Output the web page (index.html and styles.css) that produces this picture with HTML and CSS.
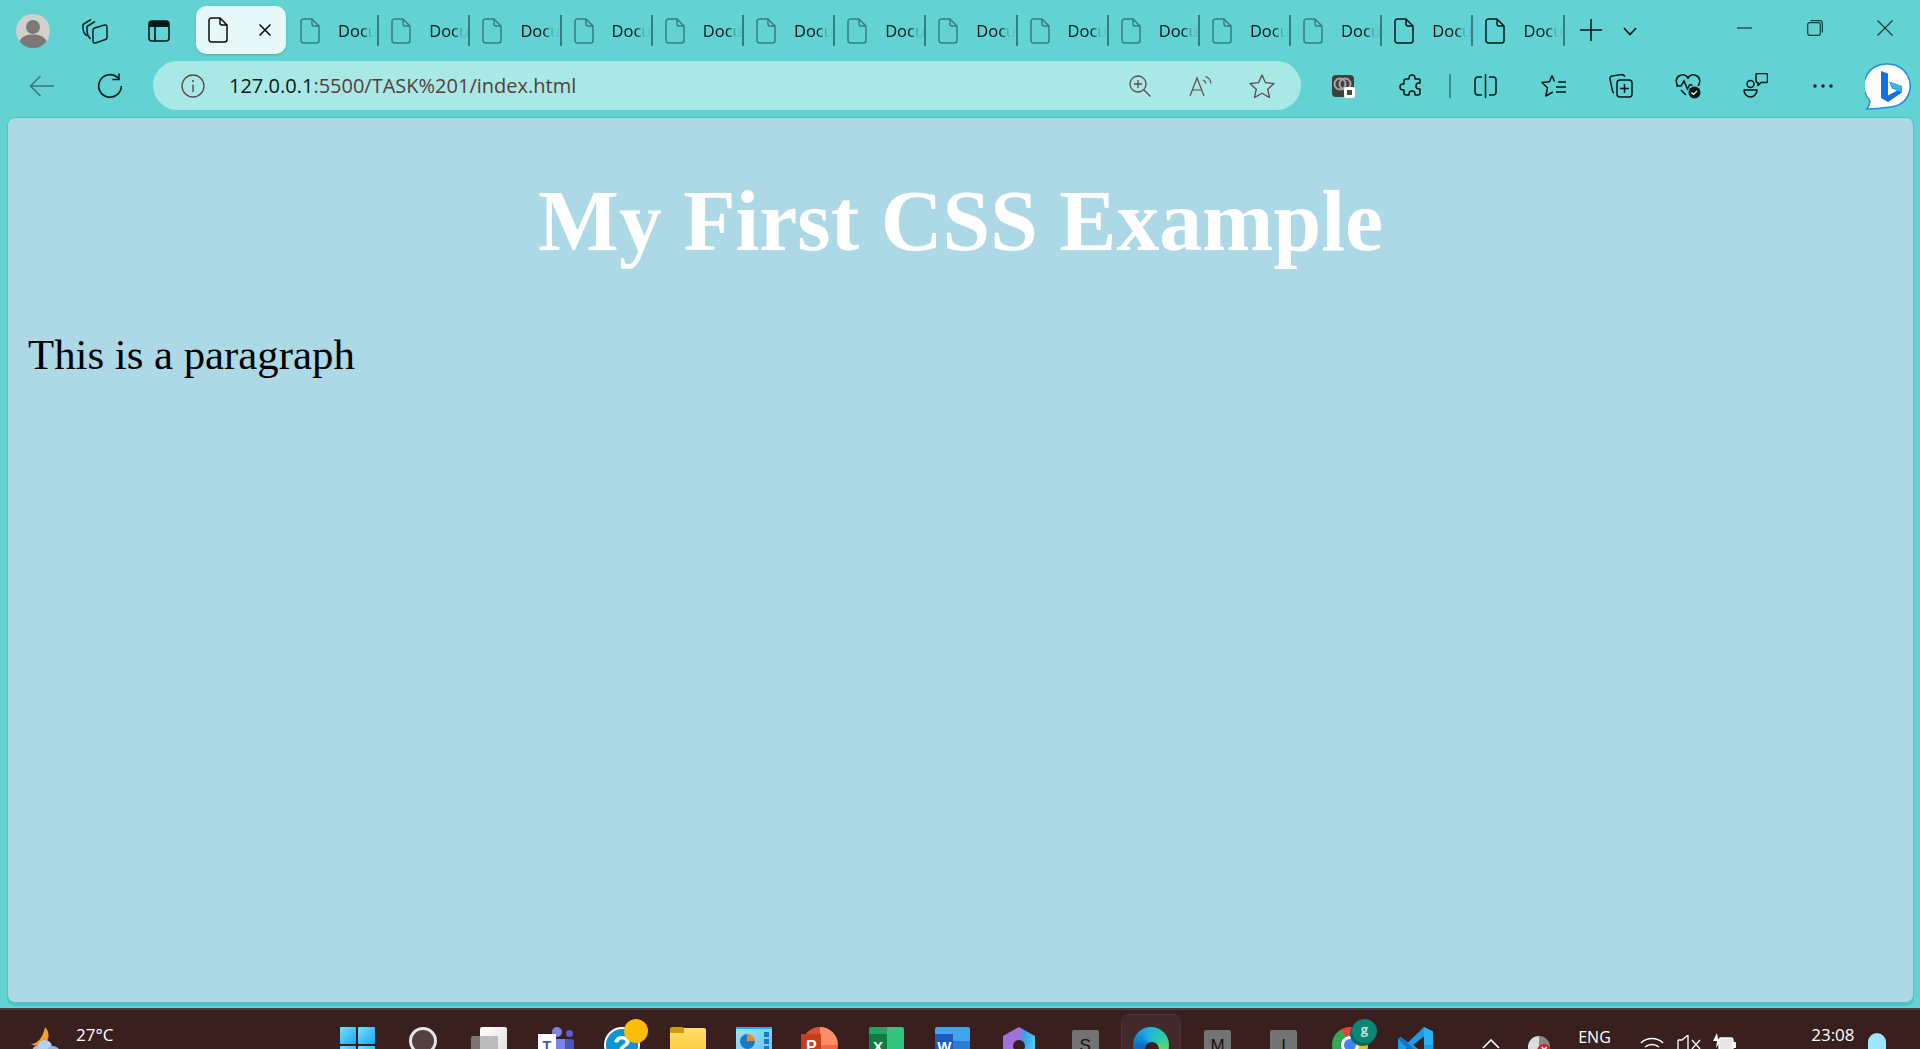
FILE: index.html
```html
<!DOCTYPE html>
<html lang="en">
<head>
<meta charset="utf-8">
<title>My First CSS Example</title>
<link rel="stylesheet" href="styles.css">
</head>
<body>
<svg class="defs" width="0" height="0">
  <symbol id="doc" viewBox="0 0 20 26"><path d="M3.5 1H12l7 7v14.5a2.5 2.5 0 0 1-2.5 2.5h-13A2.5 2.5 0 0 1 1 22.500V3.500A2.500 2.500 0 0 1 3.500 1ZM12 1v5a2 2 0 0 0 2 2h5" fill="none" stroke="currentColor" stroke-width="1.500" stroke-linejoin="round"/></symbol>
</svg>
<div class="window">
  <div class="tabstrip">
    <div class="slot-avatar">
      <svg width="34" height="34" viewBox="0 0 34 34"><circle cx="17" cy="17" r="17" fill="#d2d0cd"/><circle cx="17" cy="13" r="7" fill="#7b7977"/><path d="M3.500 27.500C6 22 11 20.500 17 20.500S28 22 30.500 27.500A17 17 0 0 1 3.500 27.500Z" fill="#7b7977"/></svg>
    </div>
    <div class="slot-work">
      <svg width="26" height="26" viewBox="0 0 26 26" fill="none" stroke="#0b2224" stroke-width="1.500" stroke-linejoin="round"><path d="M5 18C2.500 16 1 13 1 10V6.500L9 1.500"/><path d="M8.500 21C6.500 19 5 16.500 5 13V8.500L13 3.500"/><path d="M11 12c0-1 .5-1.700 1.500-2l10-3c1.500-.3 2.500.5 2.500 2v10.500c0 1-.5 1.700-1.500 2l-10 3.500c-1.500.4-2.500-.5-2.500-2Z"/></svg>
    </div>
    <div class="slot-actions">
      <svg width="22" height="22" viewBox="0 0 22 22"><rect x="1" y="1" width="20" height="20" rx="3" fill="none" stroke="#06181a" stroke-width="1.600"/><path d="M1 4a3 3 0 0 1 3-3h14a3 3 0 0 1 3 3v3H1Z" fill="#06181a"/><path d="M7 7v14" stroke="#06181a" stroke-width="1.600"/></svg>
    </div>
    <div class="tab-active">
      <svg class="icon-doc-active" width="20" height="26"><use href="#doc"/></svg>
      <svg width="14" height="14" viewBox="0 0 14 14"><path d="M1.500 1.500l11 11M12.500 1.500l-11 11" stroke="#0a0a0a" stroke-width="1.500" fill="none"/></svg>
    </div>
    <div class="tabs">
      <div class="tab"><svg width="20" height="26"><use href="#doc"/></svg><span class="tab-title">Docu</span></div>
      <div class="tab"><svg width="20" height="26"><use href="#doc"/></svg><span class="tab-title">Docu</span></div>
      <div class="tab"><svg width="20" height="26"><use href="#doc"/></svg><span class="tab-title">Docu</span></div>
      <div class="tab"><svg width="20" height="26"><use href="#doc"/></svg><span class="tab-title">Docu</span></div>
      <div class="tab"><svg width="20" height="26"><use href="#doc"/></svg><span class="tab-title">Docu</span></div>
      <div class="tab"><svg width="20" height="26"><use href="#doc"/></svg><span class="tab-title">Docu</span></div>
      <div class="tab"><svg width="20" height="26"><use href="#doc"/></svg><span class="tab-title">Docu</span></div>
      <div class="tab"><svg width="20" height="26"><use href="#doc"/></svg><span class="tab-title">Docu</span></div>
      <div class="tab"><svg width="20" height="26"><use href="#doc"/></svg><span class="tab-title">Docu</span></div>
      <div class="tab"><svg width="20" height="26"><use href="#doc"/></svg><span class="tab-title">Docu</span></div>
      <div class="tab"><svg width="20" height="26"><use href="#doc"/></svg><span class="tab-title">Docu</span></div>
      <div class="tab"><svg width="20" height="26"><use href="#doc"/></svg><span class="tab-title">Docu</span></div>
      <div class="tab tab-dark"><svg width="20" height="26"><use href="#doc"/></svg><span class="tab-title">Docu</span></div>
      <div class="tab tab-dark"><svg width="20" height="26"><use href="#doc"/></svg><span class="tab-title">Docu</span></div>
    </div>
    <div class="newtab">
      <svg width="22" height="22" viewBox="0 0 22 22"><path d="M11 0v22M0 11h22" stroke="#06181a" stroke-width="1.600"/></svg>
    </div>
    <div class="tabmenu">
      <svg width="14" height="9" viewBox="0 0 14 9"><path d="M1 1l6 6.500L13 1" fill="none" stroke="#06181a" stroke-width="1.600"/></svg>
    </div>
    <div class="winctrls">
      <svg width="16" height="16" viewBox="0 0 16 16"><path d="M0 8h15" stroke="#1a3a3c" stroke-width="1.200"/></svg>
      <svg width="16" height="16" viewBox="0 0 16 16" fill="none" stroke="#1a3a3c" stroke-width="1.200"><rect x=".7" y="2.700" width="12.600" height="12.600" rx="2"/><path d="M3.500.7h9a2.800 2.800 0 0 1 2.800 2.800v9"/></svg>
      <svg width="16" height="16" viewBox="0 0 16 16"><path d="M.5.500l15 15M15.500.500l-15 15" stroke="#1a3a3c" stroke-width="1.200"/></svg>
    </div>
  </div>

  <div class="toolbar">
    <div class="tool">
      <svg width="26" height="22" viewBox="0 0 26 22" fill="none" stroke="#3a7679" stroke-width="1.500"><path d="M25 11H1.500M11.500 1L1.500 11l10 10"/></svg>
    </div>
    <div class="tool">
      <svg width="26" height="26" viewBox="0 0 26 26" fill="none" stroke="#06181a" stroke-width="1.600"><path d="M21.500 5.500A11.300 11.300 0 1 0 24.300 13"/><path d="M22 .5v6h-6.500"/></svg>
    </div>
    <div class="addressbar">
      <svg width="24" height="24" viewBox="0 0 24 24"><circle cx="12" cy="12" r="11" fill="none" stroke="#5a4a4a" stroke-width="1.300"/><path d="M12 10.500V18" stroke="#5a4a4a" stroke-width="1.400"/><circle cx="12" cy="7" r="1" fill="#5a4a4a"/></svg>
      <span class="url"><b class="url-host">127.0.0.1</b>:5500/TASK%201/index.html</span>
      <div class="addr-actions">
        <svg class="addr-zoom" width="22" height="22" viewBox="0 0 22 22" fill="none" stroke="#5f4a4c" stroke-width="1.300"><circle cx="9" cy="9" r="8"/><path d="M14.500 14.500l7 7M5 9h8M9 5v8"/></svg>
        <svg width="24" height="23" viewBox="0 0 24 23" fill="none" stroke="#5f4a4c" stroke-width="1.200"><path d="M1 22L8 4l7 18M3.500 16h9"/><path d="M14 6c1.500.5 2.500 2 3 3.500M16.500 2.500c3 1 5 3.500 5.500 7"/></svg>
        <svg width="26" height="24" viewBox="0 0 26 24" fill="none" stroke="#5f4a4c" stroke-width="1.300" stroke-linejoin="round"><path d="M13 1l3.500 7.700 8.500.9-6.300 5.600 1.800 8.300L13 19.200l-7.500 4.300 1.800-8.300L1 9.600l8.500-.9Z"/></svg>
      </div>
    </div>
    <div class="tools-right">
      <div class="tool tool-r">
        <span class="ext-tile"><svg width="22" height="22" viewBox="0 0 22 22" fill="none" stroke="#a8a8a8" stroke-width="2"><circle cx="8" cy="9" r="5.500"/><circle cx="13" cy="9" r="5.500"/></svg><span class="ext-badge"><i></i></span></span>
      </div>
      <div class="tool tool-r">
        <svg width="24" height="24" viewBox="-2 0 24 24" fill="none" stroke="#06181a" stroke-width="1.500" stroke-linejoin="round"><path d="M9 4a3 3 0 0 1 6 0v1h4a2 2 0 0 1 1 1v3h-1a3 3 0 0 0 0 6h1v4a2 2 0 0 1-2 2h-3v-1a3 3 0 0 0-6 0v1H6a2 2 0 0 1-2-2v-3H3a3 3 0 0 1 0-6h1V7a2 2 0 0 1 2-2h3Z"/></svg>
      </div>
      <div class="divider"></div>
      <div class="tool tool-r">
        <svg width="23" height="24" viewBox="0 0 23 24" fill="none" stroke="#06181a" stroke-width="1.500"><path d="M11.500 0v24M8 3H4a3 3 0 0 0-3 3v12a3 3 0 0 0 3 3h4M15 3h4a3 3 0 0 1 3 3v12a3 3 0 0 1-3 3h-4"/></svg>
      </div>
      <div class="tool tool-r">
        <svg width="25" height="24" viewBox="0 0 25 24" fill="none" stroke="#06181a" stroke-width="1.500" stroke-linejoin="round"><path d="M11 1.500L8.500 7.800 1 8.500l5.500 5.200L4.800 22l7-4M11 1.500l2.500 6"/><path d="M17 8h8M15 13h10M15 18h10"/></svg>
      </div>
      <div class="tool tool-r">
        <svg width="25" height="26" viewBox="0 0 25 26" fill="none" stroke="#06181a" stroke-width="1.500" stroke-linejoin="round"><path d="M17 3.500 16 2.500a2.500 2.500 0 0 0-2-1L4 3a2.500 2.500 0 0 0-2 3l2.500 12c.2 1 .7 1.700 1.500 2"/><rect x="9" y="7" width="15" height="17" rx="3"/><path d="M16.500 11v9M12 15.500h9"/></svg>
      </div>
      <div class="tool tool-r">
        <svg width="26" height="26" viewBox="0 0 26 26"><path d="M3 13C0 9 1 4 5 2.500 8.500 1 11.500 2.500 13 5c1.500-2.500 4.500-4 8-2.500 4 1.500 5 6.500 2 10.500M1 13h5l3-5 3.500 8 2-4h3M6 17l5 5" fill="none" stroke="#06181a" stroke-width="1.500"/><circle cx="19.500" cy="19.500" r="6" fill="#06181a"/><path d="M16.500 19.500l2 2 3.500-3.500" fill="none" stroke="#fff" stroke-width="1.200"/></svg>
      </div>
      <div class="tool tool-r">
        <svg width="25" height="25" viewBox="0 0 25 25" fill="none" stroke="#06181a" stroke-width="1.500" stroke-linejoin="round"><circle cx="7.500" cy="11" r="3.500"/><path d="M1 17h13c0 4-3 7-6.500 7S1 21 1 17Z"/><path d="M13 2a1.500 1.500 0 0 1 1.500-1.500h8.500A1.500 1.500 0 0 1 24.500 2v6A1.500 1.500 0 0 1 23 9.500h-5l-3 3v-3h-.5A1.500 1.500 0 0 1 13 8Z"/></svg>
      </div>
      <div class="tool tool-r">
        <svg width="20" height="4" viewBox="0 0 20 4" fill="#06181a"><circle cx="2" cy="2" r="1.700"/><circle cx="10" cy="2" r="1.700"/><circle cx="18" cy="2" r="1.700"/></svg>
      </div>
      <div class="bing">
        <svg width="46" height="47" viewBox="0 0 46 47"><path d="M23 1a22 22 0 0 1 18 35c-3 4-8 7-15 8-5 .7-14 2-24 2 2-3 3-5 3-8A22 22 0 0 1 23 1Z" fill="#fff" stroke="#1b8fe8" stroke-width="1.500"/><path d="M16 8l7 2.500v22l9-5-5-2-3-7 13 4.500v6.500L23 39l-7-4Z" fill="#1670e4"/><path d="M24 18.500l13 4.500v6.500l-9-4Z" fill="#37b6ea"/></svg>
      </div>
    </div>
  </div>

  <main class="viewport">
    <h1 class="heading">My First CSS Example</h1>
    <p class="para">This is a paragraph</p>
  </main>

  <footer class="taskbar">
    <div class="weather">
      <svg width="38" height="36" viewBox="0 0 38 36"><path d="M20 0c5 5 5 13-1 17-3 2-10 2-13 0 6 0 12-6 14-17Z" fill="#f0a030"/><circle cx="14" cy="25" r="7" fill="#9cc0ee"/><circle cx="20" cy="20" r="7" fill="#b4d0f4"/><circle cx="28" cy="26" r="7" fill="#8fb4e8"/></svg>
      <span class="temp">27°C</span>
    </div>
    <div class="apps">
      <div class="app"><span class="win-logo"><i></i><i></i><i></i><i></i></span></div>
      <div class="app"><span class="search-ring"></span></div>
      <div class="app"><span class="taskview"><i></i></span></div>
      <div class="app"><span class="teams"><i class="teams-head"></i><i class="teams-head2"></i><i class="teams-body"></i><b class="teams-t">T</b></span></div>
      <div class="app"><span class="help">?</span><span class="help-dot"></span></div>
      <div class="app"><span class="folder"><i></i></span></div>
      <div class="app"><span class="panel"><i></i><u></u></span></div>
      <div class="app"><span class="ppt"><b>P</b></span></div>
      <div class="app"><span class="excel"><b>X</b></span></div>
      <div class="app"><span class="word"><b>W</b></span></div>
      <div class="app"><span class="m365"><i></i></span></div>
      <div class="app"><span class="tile">S</span></div>
      <div class="app app-on"><span class="edge"><i></i></span></div>
      <div class="app"><span class="tile">M</span></div>
      <div class="app"><span class="tile">I</span></div>
      <div class="app"><span class="chrome"><i></i></span><span class="g-badge">g</span></div>
      <div class="app"><svg width="36" height="36" viewBox="0 0 36 36"><path d="M26 0l9 4.500v27L26 36 10 20.500 3 26l-3-2v-12l3-2 7 5.500Z" fill="#1d9ce6"/><path d="M26 0l9 4.500V18H26Z" fill="#2ab0f6"/><path d="M0 12l3-2 23 21v5l-5-4Z" fill="#0b78c6"/><path d="M26 9.500L15 18l11 8.500Z" fill="#3a1f1e"/></svg></div>
    </div>
    <div class="tray">
      <svg class="tray-chev" width="18" height="10" viewBox="0 0 18 10"><path d="M1 9l8-8 8 8" fill="none" stroke="#fff" stroke-width="1.600"/></svg>
      <span class="tray-app"><i></i><b>×</b></span>
      <span class="lang">ENG</span>
      <svg class="tray-wifi" width="24" height="16" viewBox="0 0 24 16" fill="none" stroke="#fff" stroke-width="1.500"><path d="M1 8a16 16 0 0 1 22 0M5 12a11 11 0 0 1 14 0M8.500 16a6 6 0 0 1 7 0"/></svg>
      <svg class="tray-sound" width="24" height="16" viewBox="0 0 24 16" fill="none" stroke="#fff" stroke-width="1.300"><path d="M1 5h4l6-5v16M1 5v11"/><path d="M15 5l8 9M23 5l-8 9"/></svg>
      <svg class="tray-batt" width="24" height="18" viewBox="0 0 24 18"><path d="M5 0L1 8h4l-1 7 6-9H6Z" fill="#fff"/><rect x="7" y="5" width="14" height="13" rx="2" fill="#e8e6e6" stroke="#fff" stroke-width="1.300"/><rect x="21" y="9" width="3" height="6" fill="#fff"/></svg>
      <span class="clock">23:08</span>
      <span class="bell"></span>
    </div>
  </footer>
</div>
</body>
</html>
```
FILE: styles.css
```css
* { box-sizing: border-box; }
html, body { margin: 0; padding: 0; }
body { width: 1920px; height: 1049px; overflow: hidden; background: #62d2d3; font-family: "Open Sans", "Noto Sans", sans-serif; }
.defs { position: absolute; }
.window { display: flex; flex-direction: column; height: 1049px; overflow: hidden; }

.tabstrip { display: flex; align-items: flex-start; height: 61px; flex: none; }
.slot-avatar, .slot-work, .slot-actions { display: flex; justify-content: center; flex: none; height: 61px; align-items: center; }
.slot-avatar { width: 66px; }
.slot-work { width: 58px; }
.slot-actions { width: 70px; }
.tab-active { width: 90px; height: 48px; margin: 6px 0 0 2px; padding: 0 14px 0 12px; background: #e6f8f8; border-radius: 10px; box-shadow: 0 1px 2px rgba(0,60,60,.25); display: flex; align-items: center; justify-content: space-between; flex: none; color: #0a0a0a; }
.icon-doc-active { color: #0a0a0a; }
.tabs { display: flex; margin-left: 2px; flex: none; }
.tab { width: 91.2px; height: 31px; margin-top: 15px; display: flex; align-items: center; padding-left: 12px; gap: 18px; border-right: 2px solid #357f82; color: #357f82; overflow: hidden; }
.tab-dark { color: #06181a; }
.tab svg { flex: none; }
.tab-title { flex: none; white-space: nowrap; font-size: 16.500px; line-height: 24px; color: #06181a; -webkit-mask-image: linear-gradient(90deg, #000 60%, rgba(0,0,0,.08) 84%); mask-image: linear-gradient(90deg, #000 60%, rgba(0,0,0,.08) 84%); }
.newtab { margin: 19px 0 0 15px; flex: none; line-height: 0; }
.tabmenu { margin: 27px 0 0 21px; flex: none; line-height: 0; }
.winctrls { display: flex; margin: 20px 0 0 100px; gap: 54px; line-height: 0; }

.toolbar { display: flex; align-items: flex-start; height: 56px; flex: none; padding-left: 8px; }
.tool { width: 68px; height: 49px; display: flex; align-items: center; justify-content: center; flex: none; }
.addressbar { width: 1148px; height: 49px; margin-left: 9px; background: #a8e8e5; border-radius: 25px; display: flex; align-items: center; padding-left: 28px; flex: none; }
.url { margin-left: 24px; font-size: 20px; color: #5a3d3d; white-space: nowrap; }
.url-host { font-weight: 400; color: #06181a; }
.addr-actions { display: flex; align-items: center; margin-left: auto; margin-right: 26px; gap: 36px; }
.addr-zoom { margin-right: 2px; }
.tools-right { display: flex; margin-left: 8px; align-items: flex-start; }
.tool-r { width: 67.500px; }
.divider { width: 2px; height: 24px; margin: 13px 1px 0 5px; background: #3c8f91; flex: none; }
.ext-tile { position: relative; display: flex; align-items: center; justify-content: center; width: 22px; height: 22px; border-radius: 4px; background: #3e4040; }
.ext-badge { position: absolute; right: -1px; bottom: -1px; width: 11px; height: 11px; border-radius: 2px; background: #fff; display: flex; align-items: center; justify-content: center; }
.ext-badge i { width: 5px; height: 5px; background: #444; }
.bing { margin: 2px 0 0 8px; line-height: 0; flex: none; }

.viewport { flex: none; height: 886px; margin: 0 6px 0 7px; background: #add8e6; border: 1px solid #4fc3c4; border-radius: 8px; padding: 0 20px; box-shadow: 0 3px 0 #49c5c9; }
.heading { margin: 58px 0 0; text-align: center; font-family: "Liberation Serif", serif; font-weight: 700; font-size: 85.700px; line-height: 92px; color: #fff; }
.para { margin: 62px 0 0; font-family: "Liberation Serif", serif; font-size: 42.800px; line-height: 50px; color: #000; }

.taskbar { flex: none; margin-top: 5px; height: 41px; background: #391f1e; border-top: 2px solid #4d3a38; display: flex; align-items: flex-start; padding-top: 4px; overflow: hidden; color: #fff; }
.weather { width: 324px; flex: none; display: flex; padding: 11px 0 0 25px; gap: 13px; }
.weather svg { margin-top: 2px; flex: none; }
.temp { font-size: 17px; line-height: 20px; }
.apps { display: flex; flex: none; }
.app { width: 66.200px; height: 48px; padding-top: 13px; display: flex; justify-content: center; flex: none; position: relative; }
.app-on { width: 60px; margin: 0 3.100px; background: #43292a; border: 1px solid #4d3635; border-radius: 8px 8px 0 0; padding-top: 12px; }
.win-logo { width: 35px; height: 36px; display: grid; grid-template-columns: 1fr 1fr; gap: 2px; }
.win-logo i { background: linear-gradient(135deg, #6fe2ff, #1fa4ee); border-radius: 1px; }
.search-ring { width: 28px; height: 28px; border: 3px solid #e6e6e6; border-radius: 50%; background: #54403f; }
.taskview { width: 36px; height: 36px; position: relative; }
.taskview::before { content: ""; position: absolute; right: 0; top: 0; width: 27px; height: 36px; background: linear-gradient(135deg, #ffffff, #d8d8d8); border-radius: 2px; }
.taskview i { position: absolute; left: 0; top: 9px; width: 27px; height: 27px; background: #7a7676; border-radius: 2px; }
.taskview::after { content: ""; position: absolute; left: 9px; top: 9px; width: 18px; height: 27px; background: #bdbcbc; border-radius: 0 2px 0 0; }
.teams { width: 36px; height: 36px; position: relative; }
.teams-head { position: absolute; left: 14px; top: 0; width: 10px; height: 10px; border-radius: 50%; background: #7b83eb; }
.teams-head2 { position: absolute; right: 1px; top: 3px; width: 7px; height: 7px; border-radius: 50%; background: #5b5fc7; }
.teams-body { position: absolute; left: 14px; top: 12px; width: 22px; height: 24px; background: linear-gradient(90deg, #7b83eb 60%, #4b53bc 60%); border-radius: 2px; }
.teams-t { position: absolute; left: 0; top: 7px; width: 18px; height: 29px; background: #fff; color: #4b53bc; font: 700 14px/24px "Liberation Sans", sans-serif; text-align: center; }
.help { width: 36px; height: 36px; border: 2px solid #fff; border-radius: 50%; background: #0e94d2; color: #fff; font: 700 30px/34px "Liberation Sans", sans-serif; text-align: center; }
.help-dot { position: absolute; left: 35px; top: 5px; width: 24px; height: 24px; border-radius: 50%; background: #fdbb0b; }
.folder { width: 36px; height: 30px; margin-top: 1px; position: relative; background: linear-gradient(#ffdf6e, #fbc52e); border-radius: 2px; }
.folder i { position: absolute; left: 0; top: -1px; width: 14px; height: 6px; background: #d19a10; border-radius: 2px 2px 0 0; }
.panel { width: 36px; height: 36px; position: relative; background: linear-gradient(135deg, #a0e0fa, #60c0f0); border-top: 2px solid #33a8e8; }
.panel i { position: absolute; left: 4px; top: 5px; width: 15px; height: 15px; border-radius: 50%; background: conic-gradient(#f08a1a 0 25%, #1d78c4 25% 100%); }
.panel u { position: absolute; right: 3px; top: 3px; width: 5px; height: 5px; background: #1d78c4; box-shadow: 0 7px 0 #1d78c4, 0 14px 0 #1d78c4; }
.ppt { width: 36px; height: 36px; position: relative; border-radius: 50%; background: conic-gradient(#ff8f6b 0 25%, #ed6c47 25% 50%, #d35230 50% 100%); }
.ppt b { position: absolute; left: -1px; top: 7px; width: 20px; height: 29px; background: #c43e1c; color: #fff; font: 700 16px/26px "Liberation Sans", sans-serif; text-align: center; }
.excel { width: 35px; height: 36px; position: relative; background: linear-gradient(90deg, #21a366 50%, #33c481 50%); border-radius: 2px; }
.excel b { position: absolute; left: 0; top: 7px; width: 18px; height: 29px; background: #107c41; color: #fff; font: 700 15px/26px "Liberation Sans", sans-serif; text-align: center; }
.word { width: 35px; height: 36px; position: relative; background: linear-gradient(#41a5ee 40%, #2b7cd3 40%); border-radius: 2px; }
.word b { position: absolute; left: 0; top: 7px; width: 18px; height: 29px; background: #185abd; color: #fff; font: 700 15px/26px "Liberation Sans", sans-serif; text-align: center; }
.m365 { width: 32px; height: 36px; position: relative; background: linear-gradient(100deg, #a070dc 45%, #3aa0e8 60%, #5cd6f4); clip-path: polygon(50% 0, 100% 25%, 100% 75%, 50% 100%, 0 75%, 0 25%); }
.m365 i { position: absolute; left: 10px; top: 13px; width: 12px; height: 12px; border-radius: 50%; background: #3a1f1e; }
.tile { width: 27px; height: 30px; margin-top: 3px; background: #737373; border-radius: 2px; color: #111; font: 400 17px/32px "Liberation Sans", sans-serif; text-align: center; }
.edge { width: 36px; height: 36px; position: relative; border-radius: 50%; background: conic-gradient(from 270deg, #1070c0, #1bb0e8 20%, #2fc8a8 40%, #5fd870 55%, #0c59a4 75%, #1070c0); }
.edge i { position: absolute; left: 12px; top: 15px; width: 14px; height: 14px; border-radius: 50%; background: #3a1f1e; }
.chrome { width: 36px; height: 36px; position: relative; border-radius: 50%; background: conic-gradient(#ea4335 0 33%, #fbbc05 33% 66%, #34a853 66% 100%); transform: rotate(-30deg); }
.chrome i { position: absolute; left: 9px; top: 9px; width: 18px; height: 18px; border-radius: 50%; background: #4285f4; border: 3px solid #fff; }
.g-badge { position: absolute; left: 35px; top: 5px; width: 25px; height: 24px; border-radius: 50%; background: #0d8577; color: #b8e6dc; font: 700 13px/20px "Open Sans", sans-serif; text-align: center; box-shadow: -2px 3px 0 #0a6a60; }

.tray { display: flex; flex: none; position: relative; width: 470px; height: 48px; }
.tray-chev { position: absolute; left: 33px; top: 25px; }
.tray-app { position: absolute; left: 79px; top: 22px; width: 22px; height: 22px; border-radius: 50%; background: linear-gradient(90deg, #ddd 50%, #888 50%); }
.tray-app i { position: absolute; left: 0; top: 0; }
.tray-app b { position: absolute; left: 9px; top: 8px; width: 14px; height: 14px; border-radius: 50%; background: #d0202a; color: #fff; font: 700 12px/13px "Liberation Sans", sans-serif; text-align: center; }
.lang { position: absolute; left: 129px; top: 12px; font-size: 16px; line-height: 22px; }
.tray-wifi { position: absolute; left: 191px; top: 21px; }
.tray-sound { position: absolute; left: 228px; top: 21px; }
.tray-batt { position: absolute; left: 263px; top: 19px; }
.clock { position: absolute; left: 362px; top: 10px; font-size: 17px; line-height: 22px; }
.bell { position: absolute; left: 419px; top: 19px; width: 18px; height: 30px; background: #9ee6ff; border-radius: 9px 9px 0 0; }
```
